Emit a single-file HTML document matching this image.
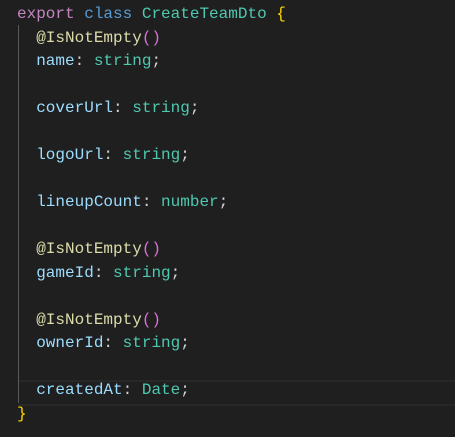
<!DOCTYPE html>
<html><head><meta charset="utf-8"><style>
html,body{margin:0;padding:0;background:#1f1f1f;width:455px;height:437px;overflow:hidden}
.c{position:absolute;left:17px;top:3px;font-family:"Liberation Mono",monospace;font-size:16px;line-height:23.5px;color:#9CDCFE;white-space:pre}
.g{position:absolute;left:18px;top:25px;width:1px;height:378px;background:#5a5a5a}
.hl{position:absolute;left:18px;right:0;top:380px;height:22px;border-top:2px solid #282828;border-bottom:2px solid #282828}
.k{color:#C586C0}.b{color:#569CD6}.t{color:#4EC9B0}.y{color:#FFD700}.d{color:#DCDCAA}.p{color:#DA70D6}.w{color:#d4d4d4}
</style></head><body>
<div class="hl"></div><div class="g"></div>
<div class="c"><span class="k">export</span> <span class="b">class</span> <span class="t">CreateTeamDto</span> <span class="y">{</span>
  <span class="d">@IsNotEmpty</span><span class="p">()</span>
  name<span class="w">:</span> <span class="t">string</span><span class="w">;</span>

  coverUrl<span class="w">:</span> <span class="t">string</span><span class="w">;</span>

  logoUrl<span class="w">:</span> <span class="t">string</span><span class="w">;</span>

  lineupCount<span class="w">:</span> <span class="t">number</span><span class="w">;</span>

  <span class="d">@IsNotEmpty</span><span class="p">()</span>
  gameId<span class="w">:</span> <span class="t">string</span><span class="w">;</span>

  <span class="d">@IsNotEmpty</span><span class="p">()</span>
  ownerId<span class="w">:</span> <span class="t">string</span><span class="w">;</span>

  createdAt<span class="w">:</span> <span class="t">Date</span><span class="w">;</span>
<span class="y">}</span></div>
</body></html>
